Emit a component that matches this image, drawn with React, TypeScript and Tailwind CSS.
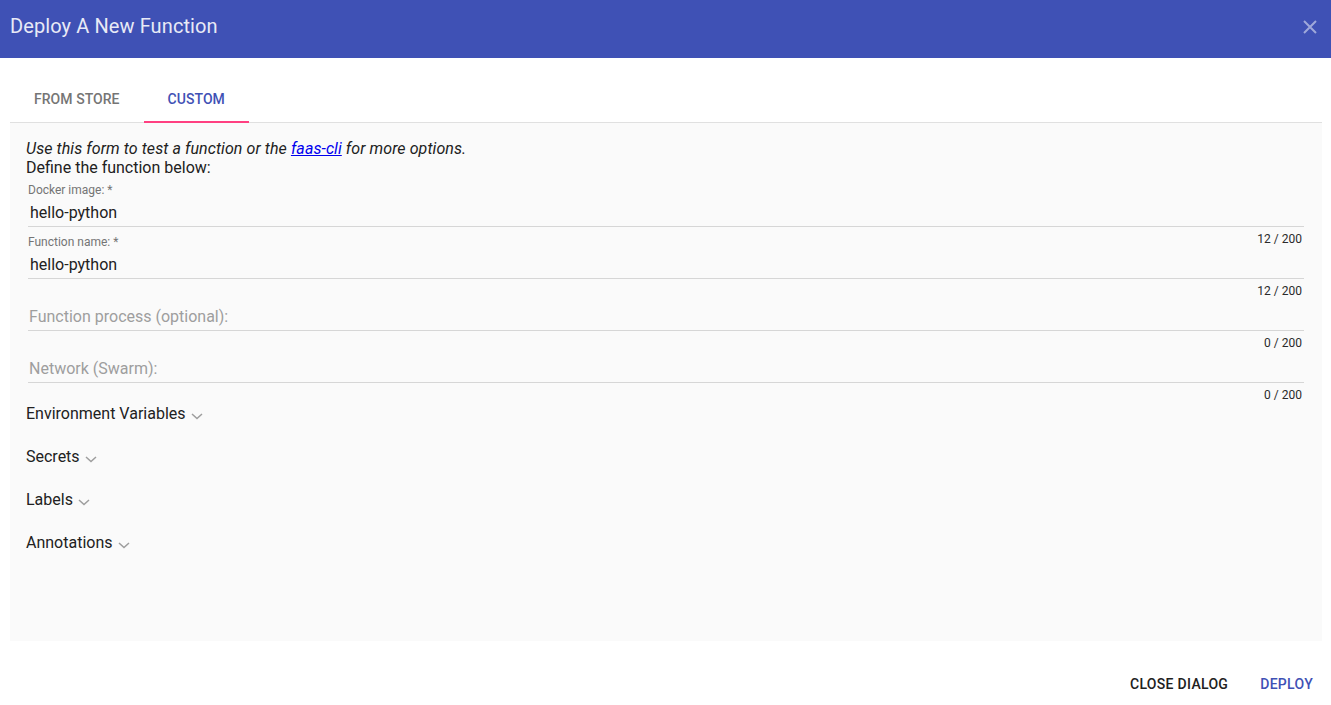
import { useState } from "react";

const Chevron = () => (
    <svg width="14" height="12" viewBox="0 0 14 12" className="mt-[4px]">
        <path d="M2 4 L7 8.6 L12 4" fill="none" stroke="#9e9e9e" strokeWidth="1.5" />
    </svg>
);

const Field = ({ label, value, placeholder }: { label?: string; value: string; placeholder: string }) => {
    return (
        <div className="relative h-[45px] flex flex-col justify-end border-b border-[#d6d6d6]">
            {label && <div className="absolute top-[1px] left-0 text-[12px] leading-[14px] text-[#757575]">{label}</div>}
            <input
                readOnly
                value={value}
                placeholder={placeholder}
                className={`h-[28px] ${value ? "px-[2px]" : "px-[1px]"} bg-transparent outline-none text-[16px] text-[#212121] placeholder:text-[#9e9e9e]`}
            />
            <div className="absolute right-[2px] top-full mt-[6px] text-[12px] leading-[14px] text-[#2a2a2a]">
                {value.length} / 200
            </div>
        </div>
    );
};

const App = () => {
    const [tab, setTab] = useState(1);
    const tabs = ["From Store", "Custom"];

    return (
        <div className="w-[1331px] h-[705px] bg-white overflow-hidden" style={{ fontFamily: "Roboto, 'Liberation Sans', sans-serif" }}>
            <div className="h-[58px] bg-[#3f51b5] flex items-center justify-between pl-[10px] pr-[14px] pb-[6px]">
                <h1 className="text-[20px] text-[#e8eaf6] font-normal tracking-[0.1px]">Deploy A New Function</h1>
                <svg width="14" height="14" viewBox="0 0 14 14" className="mt-[1px]">
                    <path d="M1 1 L13 13 M13 1 L1 13" stroke="#9fa8da" strokeWidth="2" />
                </svg>
            </div>

            <div className="ml-[10px] mr-[9px] mt-[16px]">
                <div className="flex h-[49px] border-b border-[#e0e0e0]">
                    {tabs.map((t, i) => (
                        <button
                            key={t}
                            onClick={() => setTab(i)}
                            className={`relative px-6 pt-[2px] uppercase text-[14px] font-medium tracking-[0.05px] ${tab === i ? "text-[#3f51b5]" : "text-[#757575]"}`}
                        >
                            {t}
                            {tab === i && <span className="absolute left-0 right-0 -bottom-[1px] h-[2px] bg-[#ff4081]" />}
                        </button>
                    ))}
                </div>

                <div className="h-[518px] bg-[#fafafa] px-4 pt-[16px]">
                    <p className="text-[16px] leading-[19px] italic text-[#212121] tracking-[0.08px]">
                        Use this form to test a function or the <a href="#" className="text-[#0000ee] underline">faas-cli</a> for more options.
                    </p>
                    <p className="text-[16px] leading-[19px] text-[#212121]">Define the function below:</p>

                    <div className="px-[2px] mt-[5px] flex flex-col gap-[7px]">
                        <Field label="Docker image: *" value="hello-python" placeholder="" />
                        <Field label="Function name: *" value="hello-python" placeholder="" />
                        <Field value="" placeholder="Function process (optional):" />
                        <Field value="" placeholder="Network (Swarm):" />
                    </div>

                    <div className="mt-[21px] flex flex-col gap-[24px]">
                        {["Environment Variables", "Secrets", "Labels", "Annotations"].map((s) => (
                            <div key={s} className="flex items-center gap-[4px] text-[16px] leading-[19px] text-[#212121]">
                                {s}
                                <Chevron />
                            </div>
                        ))}
                    </div>
                </div>
            </div>

            <div className="flex justify-end gap-4 pr-[10px] pt-[25px]">
                <button className="h-9 px-2 uppercase text-[14px] font-medium tracking-[0.3px] text-[#212121]">Close Dialog</button>
                <button className="h-9 px-2 uppercase text-[14px] font-medium tracking-[0.3px] text-[#3f51b5]">Deploy</button>
            </div>
        </div>
    );
};

export default App;
